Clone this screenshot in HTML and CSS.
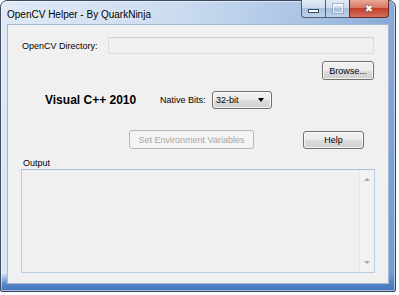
FILE: index.html
```html
<!DOCTYPE html>
<html lang="en">
<head>
    <meta charset="UTF-8">
    <title>OpenCV Helper - By QuarkNinja</title>
    <link rel="stylesheet" href="styles.css">
</head>
<body>

    <!-- Window -->
    <div class="window">

        <!-- Title Bar -->
        <div class="titlebar">
            <span class="title">OpenCV Helper - By QuarkNinja</span>
            <div class="caption-buttons">
                <div class="cap-min"><span class="glyph-min"></span></div>
                <div class="cap-max"><span class="glyph-max"></span></div>
                <div class="cap-close"><span class="glyph-close">&#x2716;</span></div>
            </div>
        </div>

        <!-- Client Area -->
        <div class="client">
            <div class="row dir-row">
                <span class="label">OpenCV Directory:</span>
                <div class="textbox"></div>
            </div>

            <div class="row browse-row">
                <button class="btn browse-btn">Browse...</button>
            </div>

            <div class="row compiler-row">
                <span class="compiler">Visual C++ 2010</span>
                <span class="label bits-label">Native Bits:</span>
                <div class="combo">
                    <span>32-bit</span>
                    <span class="combo-arrow"></span>
                </div>
            </div>

            <div class="row action-row">
                <button class="btn env-btn" disabled>Set Environment Variables</button>
                <button class="btn help-btn">Help</button>
            </div>

            <div class="label output-label">Output</div>
            <div class="output">
                <div class="scrollbar">
                    <span class="arrow-up"></span>
                    <span class="arrow-down"></span>
                </div>
            </div>
        </div>
    </div>

</body>
</html>
```

FILE: styles.css
```css
/* Page */
body {
    margin: 0;
    background: #ffffff;
    font-family: 'Liberation Sans', Arial, sans-serif;
}

/* Window frame (Aero) */
.window {
    width: 396px;
    height: 292px;
    box-sizing: border-box;
    border: 1px solid #3b4a5e;
    border-radius: 7px 7px 2px 2px;
    padding: 0 7px 8px;
    background:
        linear-gradient(to bottom, rgba(74, 124, 195, 0) 272px, #4f80c4 284px, #4576bd 290px),
        linear-gradient(100deg, #dfe9f6 0%, #cbdcf0 40%, #a9c3e4 70%, #7299cf 100%);
    box-shadow: inset 0 0 0 1px rgba(255, 255, 255, 0.5);
}

/* Title Bar */
.titlebar {
    height: 24px;
    display: flex;
    justify-content: space-between;
    align-items: flex-start;
    margin: 0 -1px;
}

.title {
    font-size: 10px;
    color: #000;
    margin-top: 8px;
    text-shadow: 0 0 6px rgba(255, 255, 255, 0.9);
}

.caption-buttons {
    display: flex;
    height: 18px;
    margin-top: -1px;
}

.cap-min, .cap-max {
    width: 23px;
    height: 17px;
    border: 1px solid #4e5f78;
    border-top: none;
    background: linear-gradient(#e2ebf6 0%, #cbdbee 45%, #a8c0de 50%, #bed2ea 100%);
    display: flex;
    align-items: center;
    justify-content: center;
}

.cap-min {
    border-radius: 0 0 0 4px;
    border-right: none;
}

.cap-max {
    border-right: none;
}

.glyph-min {
    width: 9px;
    height: 2px;
    margin-top: 5px;
    background: #fff;
    border: 1px solid #3a4a60;
}

.glyph-max {
    width: 8px;
    height: 6px;
    border: 1px solid rgba(255, 255, 255, 0.7);
    border-top-width: 2px;
    box-shadow: 0 0 0 1px rgba(90, 110, 140, 0.35);
}

.cap-close {
    width: 38px;
    height: 17px;
    border: 1px solid #6e2a24;
    border-top: none;
    border-radius: 0 0 4px 0;
    background: linear-gradient(#eaa797 0%, #d97966 45%, #c2402b 50%, #d0705b 100%);
    display: flex;
    align-items: center;
    justify-content: center;
}

.glyph-close {
    color: #fff;
    font-family: 'DejaVu Sans', sans-serif;
    font-size: 10px;
    line-height: 10px;
    text-shadow: 0 0 1px #3a1a16, 0 0 1px #3a1a16;
}

/* Client Area */
.client {
    height: 258px;
    background: #f0f0f0;
    box-shadow: 0 0 0 1px #a7b9d2;
    font-size: 9px;
    color: #000;
}

.row {
    display: flex;
    align-items: center;
}

.label {
    font-size: 9px;
}

/* Directory row */
.dir-row {
    height: 17px;
    padding: 12px 14px 0;
    justify-content: space-between;
}

.textbox {
    width: 266px;
    height: 17px;
    box-sizing: border-box;
    border: 1px solid #dcdcdc;
    border-top-color: #d2d2d2;
    background: #f0f0f0;
}

/* Buttons */
.btn {
    height: 19px;
    box-sizing: border-box;
    padding: 0;
    border: 1px solid #707070;
    border-radius: 3px;
    background: linear-gradient(#f2f2f2 0%, #ebebeb 50%, #dddddd 51%, #cfcfcf 100%);
    box-shadow: inset 0 0 0 1px rgba(255, 255, 255, 0.75);
    font-family: 'Liberation Sans', Arial, sans-serif;
    font-size: 9px;
    color: #000;
}

.btn:disabled {
    border-color: #b3b8bc;
    background: #f4f4f4;
    box-shadow: none;
    color: #a6a6a6;
}

.browse-row {
    justify-content: flex-end;
    padding: 7px 14px 0;
}

.browse-btn {
    width: 52px;
}

/* Compiler row */
.compiler-row {
    height: 18px;
    padding: 11px 0 0 37px;
}

.compiler {
    font-size: 12px;
    font-weight: bold;
    width: 115px;
}

.bits-label {
    width: 52px;
}

.combo {
    width: 60px;
    height: 18px;
    box-sizing: border-box;
    border: 1px solid #707070;
    border-radius: 3px;
    background: linear-gradient(#f2f2f2 0%, #ebebeb 50%, #dddddd 51%, #cfcfcf 100%);
    box-shadow: inset 0 0 0 1px rgba(255, 255, 255, 0.75);
    display: flex;
    align-items: center;
    justify-content: space-between;
    padding: 0 7px 0 3px;
}

.combo-arrow {
    width: 0;
    height: 0;
    border-left: 3px solid transparent;
    border-right: 3px solid transparent;
    border-top: 4px solid #000;
}

/* Action row */
.action-row {
    padding: 21px 0 0 121px;
    align-items: flex-start;
}

.env-btn {
    width: 125px;
}

.help-btn {
    width: 61px;
    height: 18px;
    margin: 1px 0 0 49px;
}

/* Output */
.output-label {
    height: 12px;
    line-height: 12px;
    padding: 8px 0 0 15px;
}

.output {
    width: 354px;
    height: 104px;
    box-sizing: border-box;
    margin-left: 13px;
    border: 1px solid #b7cde6;
    border-top-color: #a9c2e0;
    background: #f0f0f0;
    display: flex;
    justify-content: flex-end;
}

.scrollbar {
    width: 14px;
    border-left: 1px solid #e6e6e6;
    background: #f2f2f2;
    display: flex;
    flex-direction: column;
    justify-content: space-between;
    align-items: center;
    padding: 8px 0 8px;
}

.arrow-up {
    width: 0;
    height: 0;
    border-left: 3px solid transparent;
    border-right: 3px solid transparent;
    border-bottom: 3px solid #a8a8a8;
}

.arrow-down {
    width: 0;
    height: 0;
    border-left: 3px solid transparent;
    border-right: 3px solid transparent;
    border-top: 3px solid #a8a8a8;
}
```
